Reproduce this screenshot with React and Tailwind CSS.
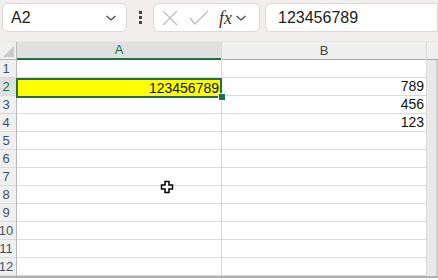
import React from "react"

const rows = [1, 2, 3, 4, 5, 6, 7, 8, 9, 10, 11, 12]
const bVals = { 2: "789", 3: "456", 4: "123" }

function Chevron() {
  return (
    <svg width="12" height="8" viewBox="0 0 12 8" fill="none" stroke="#444" strokeWidth="1.2">
      <path d="M1.5 2 L6 6 L10.5 2" />
    </svg>
  )
}

export default function App() {
  return (
    <div className="w-[438px] h-[280px] overflow-hidden bg-white font-['Liberation_Sans',Arial,sans-serif] relative">
      {/* toolbar */}
      <div className="h-[42px] bg-[#f3eeee] flex items-start pt-[3px] pl-[2px] gap-0 border-b border-[#efe5ea]">
        <div className="w-[125px] h-[29px] bg-white border border-[#dcd8d8] rounded-[6px] flex items-center justify-between pl-[8px] pr-[9px]">
          <span className="text-[16px] text-[#222]">A2</span>
          <Chevron />
        </div>
        <div className="w-[26px] h-[29px] flex flex-col items-center justify-center gap-[2px]">
          <span className="w-[3px] h-[3px] bg-[#444]" />
          <span className="w-[3px] h-[3px] bg-[#444]" />
          <span className="w-[3px] h-[3px] bg-[#444]" />
        </div>
        <div className="w-[107px] h-[29px] bg-white border border-[#dcd8d8] rounded-[6px] flex items-center pl-[7px] gap-[10px]">
          <svg width="18" height="18" viewBox="0 0 18 18" stroke="#bdbdbd" strokeWidth="1.3">
            <path d="M2 2 L16 16 M16 2 L2 16" />
          </svg>
          <svg width="20" height="16" viewBox="0 0 20 16" fill="none" stroke="#bdbdbd" strokeWidth="1.3">
            <path d="M1 8 L6 14 L19 1" />
          </svg>
          <div className="flex items-center gap-[3px]">
            <span className="font-['Liberation_Serif',serif] italic text-[18px] text-[#333] leading-none">fx</span>
            <Chevron />
          </div>
        </div>
        <div className="ml-[5px] flex-1 h-[29px] bg-white border border-[#dcd8d8] rounded-l-[6px] flex items-center pl-[12px]">
          <span className="text-[16px] text-[#222]">123456789</span>
        </div>
      </div>

      {/* grid */}
      <div className="flex">
        {/* row headers */}
        <div className="w-[17px] border-r border-[#b9b9b9] bg-[#f0f0f0] shrink-0 overflow-hidden">
          <div className="h-[18px] border-b border-[#b5b5b5] relative">
            <svg className="absolute right-[2px] bottom-[2px]" width="11" height="11" viewBox="0 0 11 11">
              <path d="M11 0 L11 11 L0 11 Z" fill="#c9c9c9" />
            </svg>
          </div>
          {rows.map((r) => (
            <div
              key={r}
              className={`h-[18px] border-b border-[#dadada] flex items-center text-[13px] leading-none ${
                r === 2 ? "bg-[#dfdfdf] text-[#1e7145]" : "text-[#3c5066]"
              }`}
            >
              <span className="w-[12px] shrink-0 flex justify-center whitespace-nowrap">{r}</span>
            </div>
          ))}
        </div>

        {/* column A */}
        <div className="w-[205px] border-r border-[#d9d9d9] shrink-0 relative">
          <div className="h-[18px] bg-[#e0e0e0] border-b-2 border-[#1e7145] flex items-center justify-center text-[13px] text-[#1e7145]">
            A
          </div>
          {rows.map((r) => (
            <div key={r} className="h-[18px] border-b border-[#dadada]" />
          ))}
          {/* selected cell */}
          <div className="absolute left-[-1px] top-[36px] w-[206px] h-[20px] border-2 border-[#1e7145] bg-[#ffff00] flex items-center justify-end pr-[1px] text-[14px] text-[#111]">
            123456789
          </div>
          <div className="absolute right-[-5px] top-[51px] w-[8px] h-[8px] bg-[#1e7145] border border-white" />
        </div>

        {/* column B */}
        <div className="w-[205px] border-r border-[#d9d9d9] shrink-0">
          <div className="h-[18px] bg-[#efefef] border-b border-[#a8a8a8] flex items-center justify-center text-[13px] text-[#444]">
            B
          </div>
          {rows.map((r) => (
            <div key={r} className="h-[18px] border-b border-[#dadada] flex items-center justify-end pr-[2px] text-[14px] text-[#111]">
              {bVals[r] || ""}
            </div>
          ))}
        </div>

        <div className="flex-1">
          <div className="h-[18px] bg-[#efefef] border-b border-[#a8a8a8]" />
          <div className="h-[216px] bg-[#e9e9e9] border-r-2 border-[#cfcfcf]" />
        </div>
      </div>
      <div className="h-[2px] bg-[#b0b0b0]" />

      {/* cursor */}
      <svg className="absolute left-[160px] top-[180px]" width="14" height="14" viewBox="0 0 14 14">
        <path d="M5 1.5 H9 V5 H12.5 V9 H9 V12.5 H5 V9 H1.5 V5 H5 Z" fill="white" stroke="black" strokeWidth="1.5" />
      </svg>
    </div>
  )
}
